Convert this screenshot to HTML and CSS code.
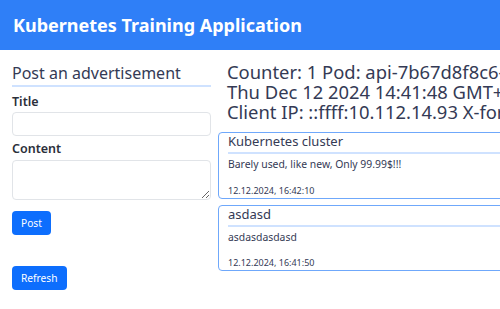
FILE: index.html
```html
<!DOCTYPE html>
<html lang="en">
<head>
<meta charset="utf-8">
<title>Kubernetes Training Application</title>
<link rel="stylesheet" href="styles.css">
</head>
<body>
<header class="topbar">
  <h1 class="brand">Kubernetes Training Application</h1>
</header>
<main class="layout">
  <section class="form-col">
    <h2 class="section-title">Post an advertisement</h2>
    <label class="field-label" for="title">Title</label>
    <input class="field" id="title" type="text">
    <label class="field-label content-label" for="content">Content</label>
    <textarea class="field area" id="content"></textarea>
    <div class="actions">
      <button class="btn" type="button">Post</button>
    </div>
    <div class="actions refresh-row">
      <button class="btn" type="button">Refresh</button>
    </div>
  </section>
  <section class="feed-col">
    <div class="status">
      <div class="status-line">Counter: 1 Pod: api-7b67d8f8c6-x2k9p</div>
      <div class="status-line">Thu Dec 12 2024 14:41:48 GMT+0100 (Central European Standard Time)</div>
      <div class="status-line">Client IP: ::ffff:10.112.14.93 X-forwarded-for: 10.112.14.93</div>
    </div>
    <article class="card">
      <h3 class="card-title">Kubernetes cluster</h3>
      <p class="card-body">Barely used, like new, Only 99.99$!!!</p>
      <p class="card-date">12.12.2024, 16:42:10</p>
    </article>
    <article class="card">
      <h3 class="card-title">asdasd</h3>
      <p class="card-body">asdasdasdasd</p>
      <p class="card-date">12.12.2024, 16:41:50</p>
    </article>
  </section>
</main>
</body>
</html>
```
FILE: styles.css
```css
* { box-sizing: border-box; }
html, body { margin: 0; padding: 0; }
body {
  font-family: "Noto Sans", "Open Sans", sans-serif;
  color: #343a55;
  background: #ffffff;
  width: 500px;
  height: 309px;
  overflow: hidden;
}
.topbar {
  height: 50px;
  background: #2f7ff7;
  display: flex;
  align-items: center;
  padding-left: 13px;
}
.brand {
  margin: 0;
  font-size: 18px;
  font-weight: 700;
  color: #ffffff;
  line-height: 22px;
  white-space: nowrap;
}
.layout {
  display: flex;
  gap: 7px;
  padding-left: 12px;
}
.form-col {
  flex: 0 0 199px;
  display: flex;
  flex-direction: column;
}
.section-title {
  margin: 12px 0 0;
  font-size: 16px;
  font-weight: 400;
  line-height: 22px;
  padding-bottom: 1px;
  border-bottom: 2px solid #cfe2ff;
}
.field-label {
  display: block;
  margin-top: 5px;
  font-size: 12.5px;
  font-weight: 600;
  line-height: 20px;
  color: #2b2f3a;
}
.content-label { margin-top: 3px; margin-bottom: 1px; }
.field {
  display: block;
  width: 199px;
  height: 24px;
  border: 1px solid #e1e4e8;
  border-radius: 4px;
  background: #fff;
  font-family: inherit;
  font-size: 12px;
  margin: 0;
  padding: 2px 6px;
}
.area { height: 40px; resize: vertical; }
.actions { display: flex; margin-top: 11px; }
.refresh-row { margin-top: 31px; }
.btn {
  height: 24px;
  padding: 0 9px;
  border: none;
  border-radius: 4px;
  background: #0d6efd;
  color: #ffffff;
  font-family: inherit;
  font-size: 10.2px;
  line-height: 24px;
  cursor: pointer;
}
.feed-col {
  flex: 0 0 420px;
  display: flex;
  flex-direction: column;
  gap: 6px;
}
.status {
  margin: 12px 0 4px 9px;
  font-size: 18.4px;
  line-height: 20px;
  white-space: nowrap;
}
.card {
  border: 1px solid #6fa8fb;
  border-radius: 4px;
  padding: 0 0 1px 9px;
}
.card-title {
  margin: 0;
  font-size: 13px;
  font-weight: 400;
  line-height: 17px;
  padding-bottom: 2px;
  border-bottom: 2px solid #cfe2ff;
}
.card-body {
  margin: 3px 0 0;
  font-size: 10.4px;
  line-height: 14px;
}
.card-date {
  margin: 13.5px 0 0;
  font-size: 9px;
  line-height: 12px;
}
```
